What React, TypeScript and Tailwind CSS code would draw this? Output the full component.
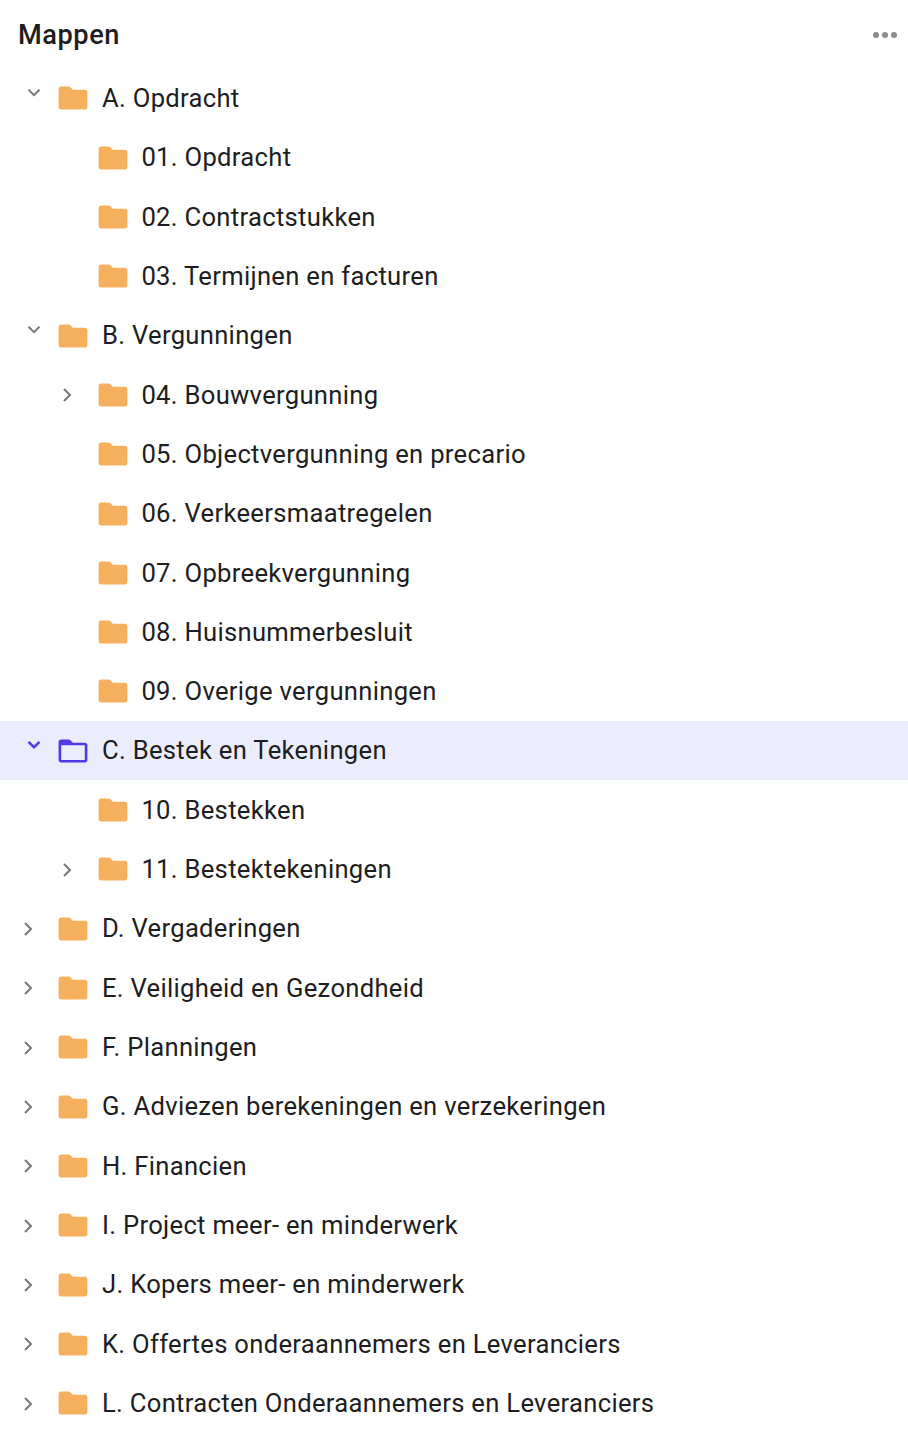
const rows: { label: string; level: number; chevron?: "down" | "right"; active?: boolean }[] = [
  { label: "A. Opdracht", level: 0, chevron: "down" },
  { label: "01. Opdracht", level: 1 },
  { label: "02. Contractstukken", level: 1 },
  { label: "03. Termijnen en facturen", level: 1 },
  { label: "B. Vergunningen", level: 0, chevron: "down" },
  { label: "04. Bouwvergunning", level: 1, chevron: "right" },
  { label: "05. Objectvergunning en precario", level: 1 },
  { label: "06. Verkeersmaatregelen", level: 1 },
  { label: "07. Opbreekvergunning", level: 1 },
  { label: "08. Huisnummerbesluit", level: 1 },
  { label: "09. Overige vergunningen", level: 1 },
  { label: "C. Bestek en Tekeningen", level: 0, chevron: "down", active: true },
  { label: "10. Bestekken", level: 1 },
  { label: "11. Bestektekeningen", level: 1, chevron: "right" },
  { label: "D. Vergaderingen", level: 0, chevron: "right" },
  { label: "E. Veiligheid en Gezondheid", level: 0, chevron: "right" },
  { label: "F. Planningen", level: 0, chevron: "right" },
  { label: "G. Adviezen berekeningen en verzekeringen", level: 0, chevron: "right" },
  { label: "H. Financien", level: 0, chevron: "right" },
  { label: "I. Project meer- en minderwerk", level: 0, chevron: "right" },
  { label: "J. Kopers meer- en minderwerk", level: 0, chevron: "right" },
  { label: "K. Offertes onderaannemers en Leveranciers", level: 0, chevron: "right" },
  { label: "L. Contracten Onderaannemers en Leveranciers", level: 0, chevron: "right" },
];

function Folder({ active }: { active?: boolean }) {
  if (active) {
    return (
      <svg width="30" height="24" viewBox="0 0 30 24" className="shrink-0">
        <path
          fillRule="evenodd"
          d="M3 .5h7.6c.6 0 1.1.2 1.5.6l2.8 2.6H27c1.3 0 2.4 1.1 2.4 2.4v15c0 1.3-1.1 2.4-2.4 2.4H3c-1.3 0-2.4-1.1-2.4-2.4V2.9C.6 1.6 1.7.5 3 .5ZM3.2 6.6v14.2c0 .2.1.3.3.3h23c.2 0 .3-.1.3-.3V6.6c0-.2-.1-.3-.3-.3H3.2Z"
          fill="#4f39e8"
        />
      </svg>
    );
  }
  return (
    <svg width="30" height="24" viewBox="0 0 30 24" className="shrink-0">
      <path d="M3 .5h7.6c.6 0 1.1.2 1.5.6l2.8 2.6H27c1.3 0 2.4 1.1 2.4 2.4v15c0 1.3-1.1 2.4-2.4 2.4H3c-1.3 0-2.4-1.1-2.4-2.4V2.9C.6 1.6 1.7.5 3 .5Z" fill="#f6b05d" />
    </svg>
  );
}

function Chevron({ dir, active }: { dir: "down" | "right"; active?: boolean }) {
  const color = active ? "#4f39e8" : "#77777c";
  if (dir === "down") {
    return (
      <svg width="14" height="10" viewBox="0 0 14 10" fill="none" className="absolute left-[26.5px] top-[19px]">
        <path d="M1.5 1.8 7 7.2l5.5-5.4" stroke={color} strokeWidth={active ? 2.4 : 2} />
      </svg>
    );
  }
  return (
    <svg width="10" height="16" viewBox="0 0 10 16" fill="none" className="absolute left-[-16px] top-[22px]">
      <path d="M2 2l6 6-6 6" stroke={color} strokeWidth="2" />
    </svg>
  );
}

function Row({ label, level, chevron, active }: (typeof rows)[number]) {
  return (
    <div className={`relative flex h-[59.32px] items-center ${active ? "bg-[#ebedfc]" : ""}`}>
      <div className={`relative flex items-center h-full ${level === 1 ? "pl-[97.6px]" : "pl-[58px]"}`}>
        {chevron === "down" && <Chevron dir="down" active={active} />}
        {chevron === "right" && (
          <div className={`absolute top-0 ${level === 1 ? "left-[78px]" : "left-[39px]"}`}>
            <Chevron dir="right" active={active} />
          </div>
        )}
        <Folder active={active} />
        <span className={`whitespace-nowrap pt-[1px] text-[25.6px] leading-none tracking-[0.012em] text-[#1d1d22] ${level === 1 ? "ml-[13.8px]" : "ml-[14px]"}`}>
          {label}
        </span>
      </div>
    </div>
  );
}

export default function App() {
  return (
    <div className="h-[1440px] w-[908px] overflow-hidden bg-white font-['Roboto',sans-serif]">
      <div className="flex h-[68.7px] items-center justify-between pl-[18px] pr-[11px] pt-[1.6px]">
        <h1 className="text-[27.2px] font-medium leading-none tracking-[0.02em] text-[#1d1d22]">Mappen</h1>
        <div className="flex gap-[2.5px]">
          <span className="size-[6.5px] rounded-full bg-[#8b8b90]" />
          <span className="size-[6.5px] rounded-full bg-[#8b8b90]" />
          <span className="size-[6.5px] rounded-full bg-[#8b8b90]" />
        </div>
      </div>
      {rows.map((r) => (
        <Row key={r.label} {...r} />
      ))}
    </div>
  );
}
